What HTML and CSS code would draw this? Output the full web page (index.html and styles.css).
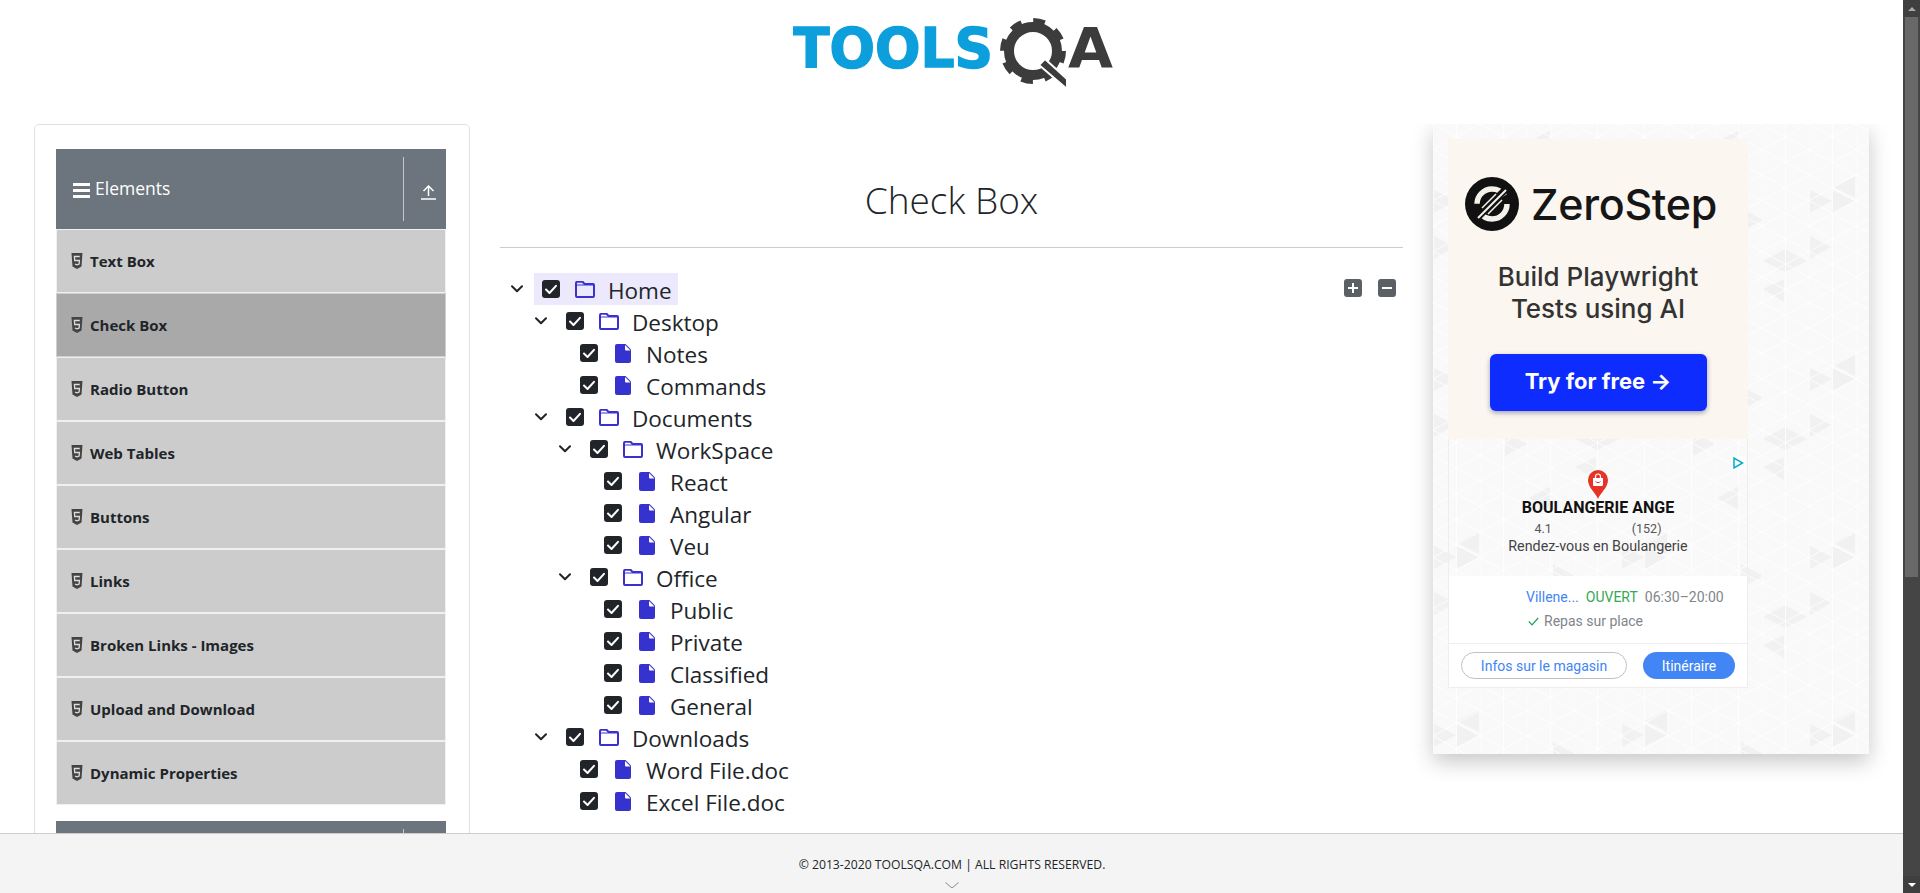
FILE: index.html
```html
<!DOCTYPE html>
<html lang="en">
<head>
<meta charset="utf-8">
<title>ToolsQA Check Box</title>
<link rel="stylesheet" href="styles.css">
</head>
<body>
<svg class="sprite" aria-hidden="true">
  <symbol id="i-chev" viewBox="0 0 12 8"><path d="M1 1.2 6 6.2 11 1.2" fill="none" stroke="#212529" stroke-width="2" stroke-linecap="round" stroke-linejoin="round"/></symbol>
  <symbol id="i-check" viewBox="0 0 18 18"><rect width="18" height="18" rx="3" fill="#212529"/><path d="M4 9.5 7.5 13 14 5.8" fill="none" stroke="#fff" stroke-width="2" stroke-linecap="round" stroke-linejoin="round"/></symbol>
  <symbol id="i-folder" viewBox="0 0 20 17"><path d="M1 3V2a1.2 1.2 0 0 1 1.2-1.2h5.3L9.6 3H18a1 1 0 0 1 1 1v11a1 1 0 0 1-1 1H2a1 1 0 0 1-1-1z" fill="none" stroke="#3a32d0" stroke-width="2" stroke-linejoin="round"/><path d="M1 4h18" stroke="#3a32d0" stroke-width="1"/></symbol>
  <symbol id="i-file" viewBox="0 0 16 19"><path d="M2 0h8.500L16 5.500V17a2 2 0 0 1-2 2H2a2 2 0 0 1-2-2V2a2 2 0 0 1 2-2z" fill="#3532cf"/><path d="M10 1v4.500a1 1 0 0 0 1 1h4.500z" fill="#fff"/></symbol>
  <symbol id="i-html" viewBox="0 0 12 16"><path d="M.5 0h11l-1 13.500L6 16l-4.500-2.500z" fill="#444"/><path d="M8.800 3.500H3.400l.3 4h4.700l-.3 3.500L6 11.800 3.900 11" fill="none" stroke="#ddd" stroke-width="1.300"/></symbol>
  <symbol id="i-upload" viewBox="0 0 15 15"><path d="M0 14h15" stroke="#fff" stroke-width="1.500"/><path d="M7.500 11V1M2.500 6l5-5 5 5" fill="none" stroke="#fff" stroke-width="1.500"/></symbol>
  <symbol id="i-menu" viewBox="0 0 17 15"><path d="M0 1.500h17M0 7.500h17M0 13.500h17" stroke="#fff" stroke-width="3" stroke-linecap="round"/></symbol>
</svg>

<div class="page">
  <header class="top">
    <svg class="logo" viewBox="0 0 320 75" role="img" aria-label="ToolsQA">
      <text class="logo-blue" x="0" y="50" textLength="200" lengthAdjust="spacingAndGlyphs">TOOLS</text>
      <circle cx="240" cy="34" r="29.500" fill="none" stroke="#3c3c3c" stroke-width="7" stroke-dasharray="11.500 11.670"/>
      <circle cx="240" cy="34" r="24" fill="none" stroke="#3c3c3c" stroke-width="10"/>
      <path d="M252 42 274 62V72L246 48z" fill="#3c3c3c" stroke="#fff" stroke-width="2"/>
      <text class="logo-dark" x="275" y="50" textLength="45" lengthAdjust="spacingAndGlyphs">A</text>
    </svg>
  </header>

  <div class="content">
    <aside class="side-card">
      <section class="group">
        <div class="group-head">
          <span class="group-title"><svg class="menu-ico"><use href="#i-menu"/></svg>Elements</span>
          <span class="group-toggle"><svg class="up-ico"><use href="#i-upload"/></svg></span>
        </div>
        <ul class="menu">
          <li class="menu-item"><svg class="html-ico"><use href="#i-html"/></svg>Text Box</li>
          <li class="menu-item active"><svg class="html-ico"><use href="#i-html"/></svg>Check Box</li>
          <li class="menu-item"><svg class="html-ico"><use href="#i-html"/></svg>Radio Button</li>
          <li class="menu-item"><svg class="html-ico"><use href="#i-html"/></svg>Web Tables</li>
          <li class="menu-item"><svg class="html-ico"><use href="#i-html"/></svg>Buttons</li>
          <li class="menu-item"><svg class="html-ico"><use href="#i-html"/></svg>Links</li>
          <li class="menu-item"><svg class="html-ico"><use href="#i-html"/></svg>Broken Links - Images</li>
          <li class="menu-item"><svg class="html-ico"><use href="#i-html"/></svg>Upload and Download</li>
          <li class="menu-item"><svg class="html-ico"><use href="#i-html"/></svg>Dynamic Properties</li>
        </ul>
      </section>
      <section class="group">
        <div class="group-head">
          <span class="group-title"></span>
          <span class="group-toggle"></span>
        </div>
      </section>
    </aside>

    <main class="main">
      <h1 class="title">Check Box</h1>
      <div class="tree-wrap">
        <ol class="tree">
          <li>
            <div class="row"><svg class="chev"><use href="#i-chev"/></svg><span class="node hi"><svg class="cb"><use href="#i-check"/></svg><svg class="fold"><use href="#i-folder"/></svg><span class="label">Home</span></span></div>
            <ol>
              <li>
                <div class="row"><svg class="chev"><use href="#i-chev"/></svg><span class="node"><svg class="cb"><use href="#i-check"/></svg><svg class="fold"><use href="#i-folder"/></svg><span class="label">Desktop</span></span></div>
                <ol>
                  <li class="row leaf"><span class="node"><svg class="cb"><use href="#i-check"/></svg><svg class="doc"><use href="#i-file"/></svg><span class="label">Notes</span></span></li>
                  <li class="row leaf"><span class="node"><svg class="cb"><use href="#i-check"/></svg><svg class="doc"><use href="#i-file"/></svg><span class="label">Commands</span></span></li>
                </ol>
              </li>
              <li>
                <div class="row"><svg class="chev"><use href="#i-chev"/></svg><span class="node"><svg class="cb"><use href="#i-check"/></svg><svg class="fold"><use href="#i-folder"/></svg><span class="label">Documents</span></span></div>
                <ol>
                  <li>
                    <div class="row"><svg class="chev"><use href="#i-chev"/></svg><span class="node"><svg class="cb"><use href="#i-check"/></svg><svg class="fold"><use href="#i-folder"/></svg><span class="label">WorkSpace</span></span></div>
                    <ol>
                      <li class="row leaf"><span class="node"><svg class="cb"><use href="#i-check"/></svg><svg class="doc"><use href="#i-file"/></svg><span class="label">React</span></span></li>
                      <li class="row leaf"><span class="node"><svg class="cb"><use href="#i-check"/></svg><svg class="doc"><use href="#i-file"/></svg><span class="label">Angular</span></span></li>
                      <li class="row leaf"><span class="node"><svg class="cb"><use href="#i-check"/></svg><svg class="doc"><use href="#i-file"/></svg><span class="label">Veu</span></span></li>
                    </ol>
                  </li>
                  <li>
                    <div class="row"><svg class="chev"><use href="#i-chev"/></svg><span class="node"><svg class="cb"><use href="#i-check"/></svg><svg class="fold"><use href="#i-folder"/></svg><span class="label">Office</span></span></div>
                    <ol>
                      <li class="row leaf"><span class="node"><svg class="cb"><use href="#i-check"/></svg><svg class="doc"><use href="#i-file"/></svg><span class="label">Public</span></span></li>
                      <li class="row leaf"><span class="node"><svg class="cb"><use href="#i-check"/></svg><svg class="doc"><use href="#i-file"/></svg><span class="label">Private</span></span></li>
                      <li class="row leaf"><span class="node"><svg class="cb"><use href="#i-check"/></svg><svg class="doc"><use href="#i-file"/></svg><span class="label">Classified</span></span></li>
                      <li class="row leaf"><span class="node"><svg class="cb"><use href="#i-check"/></svg><svg class="doc"><use href="#i-file"/></svg><span class="label">General</span></span></li>
                    </ol>
                  </li>
                </ol>
              </li>
              <li>
                <div class="row"><svg class="chev"><use href="#i-chev"/></svg><span class="node"><svg class="cb"><use href="#i-check"/></svg><svg class="fold"><use href="#i-folder"/></svg><span class="label">Downloads</span></span></div>
                <ol>
                  <li class="row leaf"><span class="node"><svg class="cb"><use href="#i-check"/></svg><svg class="doc"><use href="#i-file"/></svg><span class="label">Word File.doc</span></span></li>
                  <li class="row leaf"><span class="node"><svg class="cb"><use href="#i-check"/></svg><svg class="doc"><use href="#i-file"/></svg><span class="label">Excel File.doc</span></span></li>
                </ol>
              </li>
            </ol>
          </li>
        </ol>
        <div class="tree-tools">
          <button class="tool" aria-label="Expand all"><svg viewBox="0 0 18 18"><rect width="18" height="18" rx="3" fill="#5a6065"/><path d="M9 4v10M4 9h10" stroke="#fff" stroke-width="2"/></svg></button>
          <button class="tool" aria-label="Collapse all"><svg viewBox="0 0 18 18"><rect width="18" height="18" rx="3" fill="#5a6065"/><path d="M4 9h10" stroke="#fff" stroke-width="2"/></svg></button>
        </div>
      </div>
    </main>

    <aside class="ad">
      <svg class="ad-bg" aria-hidden="true">
        <defs>
          <pattern id="tri-lines" width="47" height="51" patternUnits="userSpaceOnUse">
            <path d="M0 0V51M23.500 0V51M0 0 23.500 12.750 47 0M0 25.500 23.500 12.750 47 25.500M0 25.500 23.500 38.250 47 25.500M0 51 23.500 38.250 47 51" fill="none" stroke="#fff" stroke-width="1" stroke-opacity=".8"/>
          </pattern>
          <pattern id="tri-dark" width="188" height="178" patternUnits="userSpaceOnUse">
            <path d="M142 137 164 125V148zM164 125 186 137 164 148zM1 66 23 77 1 89zM46 77 23 66V89zM1 112 22 123 1 135zM142 165 163 155V178zM24 63 46 52V74zM96 18 118 6V30zM120 84 142 96 120 108zM72 130 94 142 72 154z" fill="#f1f1f1"/>
          </pattern>
        </defs>
        <rect width="100%" height="100%" fill="#f9f9f9"/>
        <rect width="100%" height="100%" fill="url(#tri-dark)"/>
        <rect width="100%" height="100%" fill="url(#tri-lines)"/>
      </svg>
      <div class="promo">
        <div class="brand">
          <svg class="brand-mark" viewBox="0 0 54 54" aria-hidden="true">
            <circle cx="27" cy="27" r="27" fill="#111"/>
            <circle cx="27" cy="27" r="15" fill="none" stroke="#f4f0ea" stroke-width="5.500" stroke-dasharray="38 9"/>
            <path d="M12 41 41 12" stroke="#111" stroke-width="7"/>
            <path d="M13 41 41 13" stroke="#f4f0ea" stroke-width="2"/>
            <path d="M17 31 31 17M23 37 37 23" stroke="#f4f0ea" stroke-width="1.500"/>
          </svg>
          <span class="brand-name">ZeroStep</span>
        </div>
        <p class="promo-copy">Build Playwright<br>Tests using AI</p>
        <a class="promo-btn">Try for free →</a>
      </div>
      <div class="local">
        <svg class="adchoice" viewBox="0 0 14 14" aria-hidden="true"><rect width="14" height="14" fill="#fff"/><path d="M3 2v10l8.500-5z" fill="none" stroke="#00aecd" stroke-width="1.500"/></svg>
        <div class="local-head">
          <svg class="pin" viewBox="0 0 20 29" aria-hidden="true">
            <path d="M10 29C8 23 0 18 0 10a10 10 0 0 1 20 0c0 8-8 13-10 19z" fill="#e53327"/>
            <path d="M5 8h10v7a1 1 0 0 1-1 1H6a1 1 0 0 1-1-1z" fill="#fff"/>
            <path d="M7.500 8V6.500a2.500 2.500 0 0 1 5 0V8" fill="none" stroke="#fff" stroke-width="1.200"/>
            <path d="M7.500 11.500c1 1.500 4 1.500 5 0" fill="none" stroke="#e53327" stroke-width="1"/>
          </svg>
          <strong class="shop">BOULANGERIE ANGE</strong>
          <div class="rating"><span>4.1</span><span>(152)</span></div>
          <div class="shop-sub">Rendez-vous en Boulangerie</div>
        </div>
        <div class="local-info">
          <div class="info-line"><span class="blue">Villene...</span><span class="green">OUVERT</span><span>06:30–20:00</span></div>
          <div class="info-line second"><svg class="tick" viewBox="0 0 11 9" aria-hidden="true"><path d="M.8 4.500 4 7.800 10.200 1" fill="none" stroke="#1e9e5a" stroke-width="1.200"/></svg><span>Repas sur place</span></div>
        </div>
        <div class="local-actions">
          <a class="pill outline">Infos sur le magasin</a>
          <a class="pill solid">Itinéraire</a>
        </div>
      </div>
    </aside>
  </div>

  <footer class="foot">
    <span class="foot-text">© 2013-2020 TOOLSQA.COM | ALL RIGHTS RESERVED.</span>
    <svg class="foot-chev" viewBox="0 0 14 7" aria-hidden="true"><path d="M.5.500 7 6 13.500.500" fill="none" stroke="#888" stroke-width="1"/></svg>
  </footer>
</div>

<div class="scrollbar" aria-hidden="true">
  <span class="sb-btn"><i class="arrow-up"></i></span>
  <span class="sb-thumb"></span>
  <span class="sb-rest"></span>
  <span class="sb-btn"><i class="arrow-down"></i></span>
</div>
</body>
</html>
```
FILE: styles.css
```css
* { box-sizing: border-box; }
html, body { height: 100%; }
body {
  margin: 0;
  display: flex;
  overflow: hidden;
  background: #fff;
  color: #212529;
  font-family: "Open Sans", "Liberation Sans", sans-serif;
}
.sprite { display: none; }
ol, ul { list-style: none; margin: 0; padding: 0; }

.page { flex: 1; min-width: 0; display: flex; flex-direction: column; height: 893px; }

.top { height: 124px; flex: none; display: flex; justify-content: center; padding: 17px 0 0 3px; }
.logo { width: 320px; height: 75px; display: block; }
.logo-blue { font: bold 55px "DejaVu Sans", sans-serif; fill: #0d9fdc; stroke: #0d9fdc; stroke-width: 1.5px; }
.logo-dark { font: bold 55px "DejaVu Sans", sans-serif; fill: #3c3c3c; }

.content { flex: 1; min-height: 0; overflow: hidden; display: flex; align-items: flex-start; gap: 30px; padding: 0 34px; }

/* sidebar */
.side-card { flex: none; width: 436px; border: 1px solid #dfdfdf; border-radius: 5px; padding: 24px 23px 24px 21px; }
.group { margin-bottom: 16px; }
.group-head { height: 80px; background: #6c757d; color: #fff; display: flex; align-items: stretch; padding: 8px 0; }
.group-title { flex: 1; display: flex; align-items: center; padding: 0 0 2px 17px; font-size: 17.500px; }
.menu-ico { width: 17px; height: 15px; margin: 4px 5px 0 0; }
.group-toggle { flex: none; width: 43px; border-left: 1px solid #c3c7ca; display: flex; align-items: center; padding: 7px 0 0 17px; }
.up-ico { width: 15px; height: 15px; }
.menu-item {
  height: 64px;
  display: flex;
  align-items: center;
  gap: 7px;
  padding-left: 14px;
  background: #ccc;
  border: 1px solid #f0f0f0;
  font-size: 15px;
  font-weight: 700;
  color: #212529;
}
.menu-item.active { background: #a9a9a9; border-color: #ccd0d4; }
.html-ico { width: 12px; height: 16px; flex: none; }

/* main */
.main { flex: none; width: 903px; }
.title {
  margin: 0;
  padding: 52px 0 23px;
  text-align: center;
  font-size: 37px;
  line-height: 48px;
  font-weight: 300;
  border-bottom: 1px solid #ccc;
}
.tree-wrap { display: flex; justify-content: space-between; margin-top: 25px; padding: 0 7px 0 5px; }
.tree ol { padding-left: 24px; }
.row { display: flex; align-items: center; height: 32px; }
.chev { width: 24px; height: 8px; flex: none; }
.leaf { padding-left: 14px; }
.node { display: flex; align-items: center; height: 32px; margin-left: 5px; padding: 0 6px 0 8px; font-size: 22.500px; line-height: 32px; white-space: nowrap; }
.node.hi { background: #ebe9fb; }
.cb { width: 18px; height: 18px; flex: none; }
.fold { width: 20px; height: 17px; flex: none; margin: 0 2px 0 15px; }
.doc { width: 16px; height: 19px; flex: none; margin: 0 4px 0 17px; }
.label { margin-left: 11px; padding-top: 4px; }
.tree-tools { display: flex; gap: 16px; padding-top: 6px; }
.tool { width: 18px; height: 18px; padding: 0; border: 0; background: none; display: block; }
.tool svg { width: 18px; height: 18px; display: block; }

/* ad */
.ad { flex: none; width: 436px; height: 630px; padding: 15px; position: relative; box-shadow: 0 8px 20px rgba(0, 0, 0, .22); }
.ad-bg { position: absolute; inset: 0; width: 100%; height: 100%; }
.promo { position: relative; width: 300px; height: 300px; background: #fbf6f0; display: flex; flex-direction: column; align-items: center; font-family: Inter, "Liberation Sans", sans-serif; padding-top: 38px; }
.brand { display: flex; align-items: center; gap: 12px; height: 54px; align-self: flex-start; padding-left: 17px; }
.brand-mark { width: 54px; height: 54px; flex: none; }
.brand-name { font-size: 43px; font-weight: 500; color: #161616; letter-spacing: -.3px; }
.promo-copy { margin: 30px 0 0; text-align: center; font-size: 26px; line-height: 32px; font-weight: 500; color: #333; }
.promo-btn { margin-top: 29px; width: 217px; height: 57px; padding-bottom: 4px; border-radius: 6px; background: #0f2cff; color: #fff; font-size: 22px; font-weight: 700; display: flex; align-items: center; justify-content: center; box-shadow: 0 2px 5px rgba(0, 0, 60, .35); }

.local { position: relative; width: 300px; height: 249px; border: 1px solid #eee; border-top: 0; font-family: Roboto, "Liberation Sans", sans-serif; display: flex; flex-direction: column; }
.adchoice { position: absolute; top: 17px; right: 2px; width: 14px; height: 14px; }
.local-head { height: 137px; display: flex; flex-direction: column; align-items: center; padding-top: 31px; }
.pin { width: 20px; height: 29px; flex: none; }
.shop { font-size: 16px; font-weight: 700; color: #111; line-height: 20px; margin-top: -1px; }
.rating { width: 127px; display: flex; justify-content: space-between; font-size: 12.500px; line-height: 18px; color: #555; margin: 2px 0 0 0; }
.shop-sub { font-size: 14.300px; line-height: 16px; color: #444; }
.local-info { height: 68px; background: #fff; border-bottom: 1px solid #eee; padding: 12px 0 0 77px; font-size: 14px; color: #80868b; }
.info-line { display: flex; gap: 7px; height: 18px; line-height: 18px; white-space: nowrap; }
.info-line.second { margin-top: 6px; font-size: 14px; gap: 5px; padding-left: 2px; align-items: center; }
.tick { width: 11px; height: 9px; }
.blue { color: #4285f4; }
.green { color: #34a853; }
.local-actions { flex: 1; background: #fff; display: flex; gap: 16px; padding: 8px 0 0 12px; }
.pill { height: 27px; border-radius: 14px; font-size: 14px; display: flex; align-items: center; justify-content: center; }
.pill.outline { width: 166px; border: 1px solid #bdc1c6; color: #4285f4; }
.pill.solid { width: 92px; background: #4285f4; color: #fff; }

/* footer */
.foot { flex: none; height: 60px; background: #f4f4f4; border-top: 1px solid #ccc; display: flex; flex-direction: column; align-items: center; padding: 22px 0 0 1px; }
.foot-text { font-size: 12.200px; line-height: 18px; color: #212529; white-space: nowrap; }
.foot-chev { width: 14px; height: 7px; margin-top: 8px; }

/* scrollbar */
.scrollbar { flex: none; width: 17px; height: 893px; background: #454545; display: flex; flex-direction: column; align-items: center; }
.sb-btn { flex: none; width: 17px; height: 17px; background: #3f3f3f; display: flex; align-items: center; justify-content: center; }
.sb-thumb { flex: none; width: 13px; height: 560px; background: #686868; }
.sb-rest { flex: 1; }
.arrow-up { width: 0; height: 0; border: 4px solid transparent; border-top: 0; border-bottom: 4px solid #a8a8a8; }
.arrow-down { width: 0; height: 0; border: 4px solid transparent; border-bottom: 0; border-top: 4px solid #fff; }
```
